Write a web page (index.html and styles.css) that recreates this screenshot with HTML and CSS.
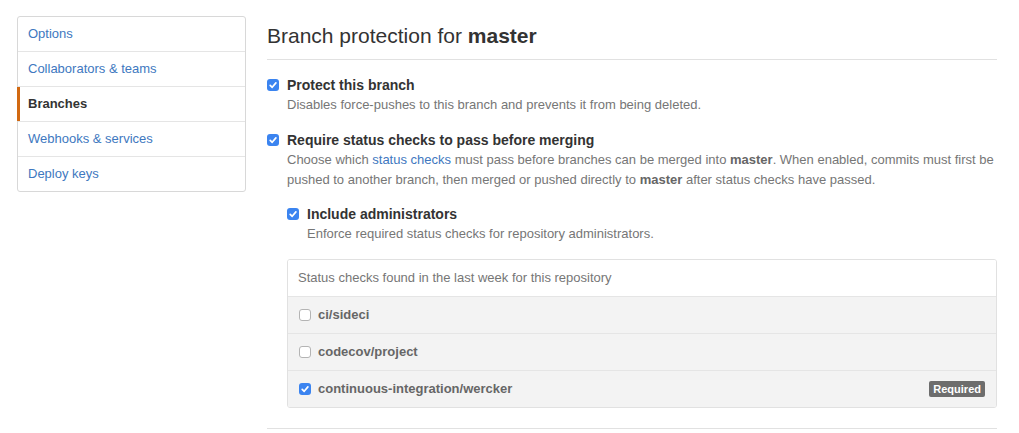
FILE: index.html
```html
<!DOCTYPE html>
<html>
<head>
<meta charset="utf-8">
<link rel="stylesheet" href="styles.css">
</head>
<body>
<div class="page">
  <nav class="menu">
    <a class="menu-item">Options</a>
    <a class="menu-item">Collaborators &amp; teams</a>
    <a class="menu-item selected">Branches</a>
    <a class="menu-item">Webhooks &amp; services</a>
    <a class="menu-item">Deploy keys</a>
  </nav>
  <main class="main">
    <h2 class="subhead">Branch protection for <strong>master</strong></h2>

    <div class="check-item">
      <div class="check-label"><span class="cb checked"><svg viewBox="0 0 12 12"><path d="M3.2 6.3 L5.2 8.3 L8.9 3.9"/></svg></span>Protect this branch</div>
      <p class="note">Disables force-pushes to this branch and prevents it from being deleted.</p>
    </div>

    <div class="check-item">
      <div class="check-label"><span class="cb checked"><svg viewBox="0 0 12 12"><path d="M3.2 6.3 L5.2 8.3 L8.9 3.9"/></svg></span>Require status checks to pass before merging</div>
      <p class="note">Choose which <a class="link">status checks</a> must pass before branches can be merged into <strong>master</strong>. When enabled, commits must first be<br>pushed to another branch, then merged or pushed directly to <strong>master</strong> after status checks have passed.</p>

      <div class="check-item nested">
        <div class="check-label"><span class="cb checked"><svg viewBox="0 0 12 12"><path d="M3.2 6.3 L5.2 8.3 L8.9 3.9"/></svg></span>Include administrators</div>
        <p class="note">Enforce required status checks for repository administrators.</p>
      </div>

      <div class="status-box">
        <div class="status-header">Status checks found in the last week for this repository</div>
        <div class="status-row"><span class="cb"></span><span class="ctx">ci/sideci</span></div>
        <div class="status-row"><span class="cb"></span><span class="ctx">codecov/project</span></div>
        <div class="status-row"><span class="cb checked"><svg viewBox="0 0 12 12"><path d="M3.2 6.3 L5.2 8.3 L8.9 3.9"/></svg></span><span class="ctx">continuous-integration/wercker</span><span class="badge">Required</span></div>
      </div>
    </div>

    <hr class="rule">
  </main>
</div>
</body>
</html>
```

FILE: styles.css
```css
* { box-sizing: border-box; }
html, body { margin: 0; background: #fff; }
body {
  font-family: "Liberation Sans", Arial, Helvetica, sans-serif;
  font-size: 14px;
  color: #333;
}
.page {
  display: flex;
  gap: 21px;
  padding: 16px 0 0 17px;
}
.menu {
  width: 229px;
  flex: none;
  border: 1px solid #d8d8d8;
  border-radius: 3px;
  align-self: flex-start;
  display: flex;
  flex-direction: column;
}
.menu-item {
  position: relative;
  display: block;
  height: 35px;
  line-height: 33px;
  padding-left: 10px;
  color: #4078c0;
  border-bottom: 1px solid #e5e5e5;
  font-size: 13px;
}
.menu-item:last-child { border-bottom: 0; height: 34px; }
.menu-item.selected { color: #333; font-weight: bold; }
.menu-item.selected::before {
  content: "";
  position: absolute;
  left: -1px;
  top: 0;
  bottom: 0;
  width: 3px;
  background: #d26911;
}
.main { width: 730px; flex: none; }
.subhead {
  margin: 0;
  padding: 5px 0 8px;
  font-size: 21px;
  line-height: 30px;
  font-weight: normal;
  color: #333;
  border-bottom: 1px solid #e1e1e1;
}
.subhead strong { font-weight: bold; }
.check-item { margin-top: 15px; padding-left: 20px; }
.check-item + .check-item { margin-top: 15px; }
.check-item.nested { margin-top: 14px; }
.check-label {
  position: relative;
  font-weight: bold;
  font-size: 14px;
  line-height: 20px;
  color: #333;
}
.check-label .cb { position: absolute; left: -20px; top: 4px; }
.note {
  margin: 0;
  font-size: 13px;
  line-height: 20px;
  color: #767676;
}
.note strong { color: #666; }
.link { color: #4078c0; }
.cb {
  display: inline-block;
  width: 12px;
  height: 12px;
  border: 1px solid #b4b4b4;
  border-radius: 3px;
  background: #fff;
  flex: none;
}
.cb.checked {
  border: 0;
  background: #3b84f0;
}
.cb svg { display: block; width: 12px; height: 12px; }
.cb svg path { fill: none; stroke: #fff; stroke-width: 1.7; stroke-linecap: round; stroke-linejoin: round; }
.status-box {
  margin-top: 15px;
  border: 1px solid #e1e1e1;
  border-radius: 3px;
  overflow: hidden;
}
.status-header {
  padding: 8px 10px;
  line-height: 20px;
  font-size: 13px;
  color: #767676;
  background: #fff;
}
.status-row {
  display: flex;
  align-items: center;
  gap: 7px;
  padding: 8px 11px;
  height: 37px;
  border-top: 1px solid #e5e5e5;
  background: #f3f3f3;
}
.ctx {
  font-weight: bold;
  font-size: 13px;
  line-height: 20px;
  color: #666;
}
.badge {
  margin-left: auto;
  background: #6d6d6d;
  color: #fff;
  font-size: 11px;
  font-weight: bold;
  line-height: 16px;
  padding: 0 4px;
  border-radius: 2px;
}
.rule {
  margin: 20px 0 0;
  border: 0;
  border-top: 1px solid #e1e1e1;
}
```
